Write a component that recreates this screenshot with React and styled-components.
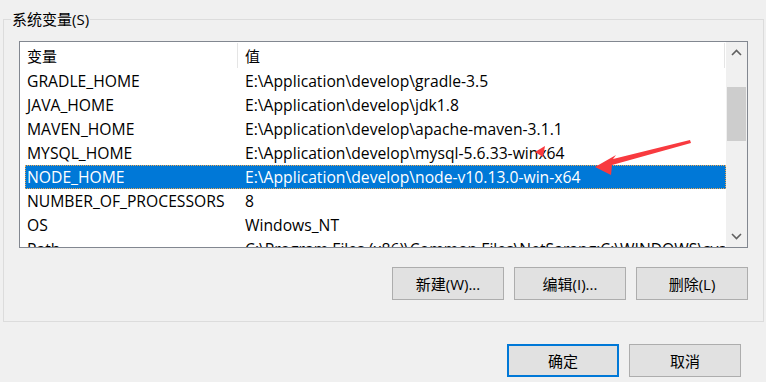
import React from 'react';
import styled, { createGlobalStyle } from 'styled-components';

const GlobalStyle = createGlobalStyle`
  html, body {
    margin: 0;
    padding: 0;
    background: #f0f0f0;
  }
  body {
    font-family: "Open Sans", "Noto Sans CJK SC", sans-serif;
    font-size: 15px;
    color: #000;
  }
`;

const Window = styled.div`
  position: relative;
  width: 766px;
  height: 382px;
  background: #f0f0f0;
  overflow: hidden;
  display: flex;
  flex-direction: column;
`;

const GroupBox = styled.fieldset`
  margin: 10px 2px 0 3px;
  padding: 12px 0 21px;
  border: 1px solid #dcdcdc;
  min-width: 0;
`;

const Legend = styled.legend`
  margin-left: 7px;
  padding: 0 1px;
  line-height: 19px;
  height: 19px;
`;

const GroupBody = styled.div`
  padding: 0 15px;
`;

const ListBox = styled.div`
  display: flex;
  height: 205px;
  border: 1px solid #828790;
  background: #fff;
`;

const Viewport = styled.div`
  flex: 1;
  overflow: hidden;
  padding-left: 5px;
`;

const HeaderRow = styled.div`
  display: flex;
  height: 27px;
  align-items: stretch;
`;

const HeaderCell = styled.div`
  width: ${p => p.$w}px;
  padding-left: ${p => p.$pad}px;
  box-sizing: border-box;
  display: flex;
  align-items: center;
  position: relative;

  &::after {
    content: '';
    position: absolute;
    right: 0;
    top: 1px;
    bottom: 1px;
    width: 1px;
    background: #e5e5e5;
  }
`;

const Row = styled.div`
  display: flex;
  height: 24px;
  line-height: 24px;
  font-size: 15.7px;
  white-space: nowrap;
  background: ${p => (p.$selected ? '#0078d7' : 'transparent')};
  color: ${p => (p.$selected ? '#fff' : '#000')};
  outline: ${p => (p.$selected ? '1px dotted #f0a850' : 'none')};
  outline-offset: -1px;
`;

const Cell = styled.div`
  width: ${p => p.$w}px;
  padding-left: ${p => p.$pad}px;
  box-sizing: border-box;
  overflow: hidden;
  flex-shrink: 0;
`;

const ScrollBar = styled.div`
  width: 21px;
  background: #f0f0f0;
  display: flex;
  flex-direction: column;
`;

const ScrollButton = styled.div`
  height: 21px;
  display: flex;
  align-items: center;
  justify-content: center;
  color: #606060;
`;

const Track = styled.div`
  flex: 1;
  padding-top: 24px;
`;

const Thumb = styled.div`
  height: 54px;
  margin: 0 1px;
  background: #cdcdcd;
`;

const ButtonRow = styled.div`
  display: flex;
  justify-content: flex-end;
  gap: 10px;
  margin-top: ${p => p.$top || 0}px;
  padding-right: ${p => p.$right || 0}px;
`;

const Button = styled.button`
  width: 112px;
  height: 33px;
  box-sizing: border-box;
  background: #e1e1e1;
  border: ${p => (p.$default ? '2px solid #0078d7' : '1px solid #adadad')};
  font-family: inherit;
  font-size: 15px;
  color: #000;
  padding: 0;
  margin: 0;
`;

const Annotation = styled.svg`
  position: absolute;
  left: 0;
  top: 0;
  pointer-events: none;
`;

const Chevron = ({ up }) => (
  <svg width="11" height="7" viewBox="0 0 11 7">
    <path
      d={up ? 'M1 6 L5.5 1.5 L10 6' : 'M1 1 L5.5 5.5 L10 1'}
      fill="none"
      stroke="currentColor"
      strokeWidth="1.6"
    />
  </svg>
);

const COL1 = 213;
const COL2 = 487;

const vars = [
  ['GRADLE_HOME', 'E:\\Application\\develop\\gradle-3.5'],
  ['JAVA_HOME', 'E:\\Application\\develop\\jdk1.8'],
  ['MAVEN_HOME', 'E:\\Application\\develop\\apache-maven-3.1.1'],
  ['MYSQL_HOME', 'E:\\Application\\develop\\mysql-5.6.33-winx64'],
  ['NODE_HOME', 'E:\\Application\\develop\\node-v10.13.0-win-x64'],
  ['NUMBER_OF_PROCESSORS', '8'],
  ['OS', 'Windows_NT'],
  ['Path', 'C:\\Program Files (x86)\\Common Files\\NetSarang;C:\\WINDOWS\\system32'],
];

const App = () => (
  <Window>
    <GlobalStyle />
    <GroupBox>
      <Legend>系统变量(S)</Legend>
      <GroupBody>
        <ListBox>
          <Viewport>
            <HeaderRow>
              <HeaderCell $w={COL1} $pad={2}>变量</HeaderCell>
              <HeaderCell $w={COL2} $pad={7}>值</HeaderCell>
            </HeaderRow>
            {vars.map(([name, value]) => (
              <Row key={name} $selected={name === 'NODE_HOME'}>
                <Cell $w={COL1} $pad={2}>{name}</Cell>
                <Cell $w={COL2} $pad={7}>{value}</Cell>
              </Row>
            ))}
          </Viewport>
          <ScrollBar>
            <ScrollButton><Chevron up /></ScrollButton>
            <Track><Thumb /></Track>
            <ScrollButton><Chevron /></ScrollButton>
          </ScrollBar>
        </ListBox>
        <ButtonRow $top={19}>
          <Button>新建(W)...</Button>
          <Button>编辑(I)...</Button>
          <Button>删除(L)</Button>
        </ButtonRow>
      </GroupBody>
    </GroupBox>
    <ButtonRow $top={22} $right={25}>
      <Button $default>确定</Button>
      <Button>取消</Button>
    </ButtonRow>

    {/* red annotation arrows drawn over the list */}
    <Annotation width="766" height="382">
      <polygon
        points="690,140 613,159 616,155 595,167 611,175 612,165 691,143"
        fill="#f83a3f"
      />
      <polygon points="535,152 545,146 543,157" fill="#f83a3f" />
    </Annotation>
  </Window>
);

export default App;
